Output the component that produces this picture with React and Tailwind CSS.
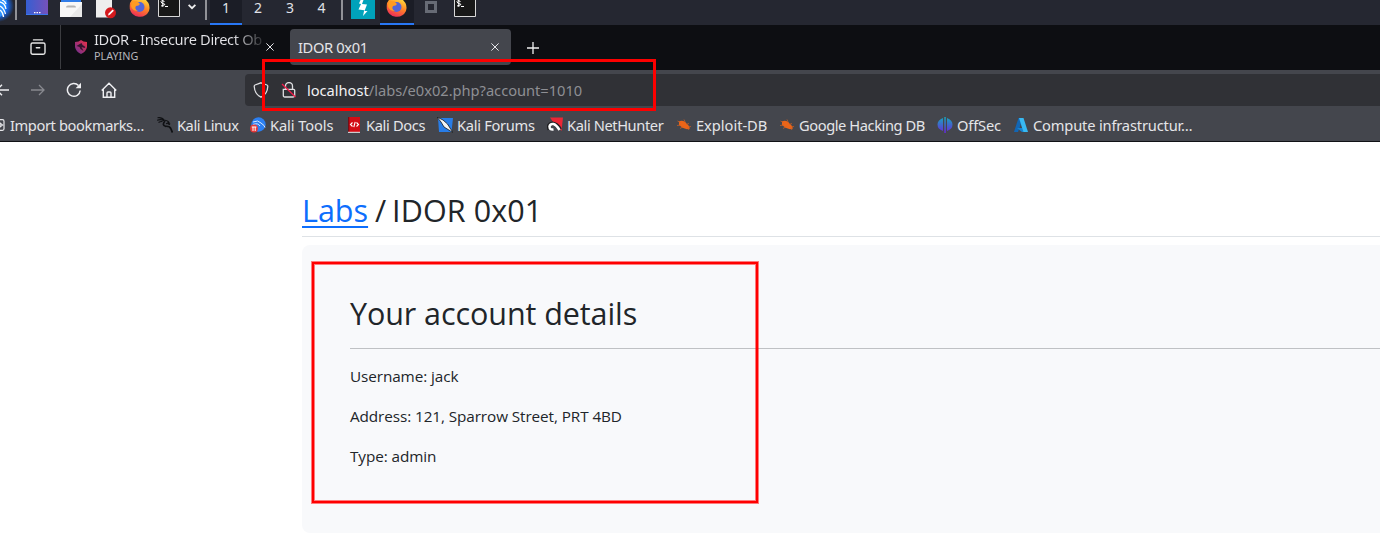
const PANEL_TEXT = "font-['Noto_Sans',sans-serif]";

function KaliMark() {
  return (
    <svg className="h-[25px] w-[15px] shrink-0" viewBox="0 0 15 25">
      <defs>
        <radialGradient id="kaliglow" gradientUnits="userSpaceOnUse" cx="-2" cy="6" r="16">
          <stop offset=".6" stopColor="#1768e8" />
          <stop offset="1" stopColor="#1768e8" stopOpacity="0" />
        </radialGradient>
      </defs>
      <path d="M0 0H15V25H0z" fill="url(#kaliglow)" />
      <path d="M0 0H7Q7 13 0 17Z" fill="#2c93ff" />
      <path d="M0 2Q5 3 6 9M0 6Q4 8 5.500 14M0 10Q3 12 3.500 17M2 0Q5 1 6 4" fill="none" stroke="#fff" strokeWidth="1.300" />
    </svg>
  );
}

function Desktop() {
  return (
    <svg className="h-[25px] w-[22px]" viewBox="0 0 22 25">
      <defs>
        <linearGradient id="desk">
          <stop offset="0" stopColor="#355fd2" />
          <stop offset="1" stopColor="#7651ba" />
        </linearGradient>
      </defs>
      <path d="M0 0h22v15H0z" fill="url(#desk)" />
      <path d="M0 14.500h22" stroke="#3b76ee" />
      <path d="M8 12.700h1.500m1 0H12m1 0h1.500" stroke="#fff" strokeWidth="1.200" />
    </svg>
  );
}

function Files() {
  return (
    <svg className="h-[25px] w-[22px]" viewBox="0 0 22 25">
      <path d="M0 2h22v15H0z" fill="#f7f7f7" />
      <path d="M22 4v13H10z" fill="#e9e9e9" />
      <path d="M1 0h20v2H1z" fill="#2f7ce8" />
      <path d="M6 7.500q0-2 2-2h6q2 0 2 2z" fill="#b4b4b4" />
    </svg>
  );
}

function Editor() {
  return (
    <svg className="h-[25px] w-[22px]" viewBox="0 0 22 25">
      <path d="M1 0h16v17.500H1z" fill="#eee" />
      <circle cx="15.500" cy="12.800" r="5.500" fill="#d3191d" />
      <path d="M13 15.500l.6-2 4-4 1.300 1.300-4 4z" fill="#fff" />
    </svg>
  );
}

function Firefox() {
  return (
    <svg className="h-[25px] w-[22px]" viewBox="0 0 22 25">
      <defs>
        <linearGradient id="fox" x1=".8" y1="0" x2=".3" y2="1">
          <stop offset="0" stopColor="#ffd43b" />
          <stop offset=".45" stopColor="#ff8325" />
          <stop offset="1" stopColor="#ed285c" />
        </linearGradient>
      </defs>
      <path d="M1 3L3 0H17Q22 5 20 11A10.300 10.300 0 0 1 .8 9Q.5 6 1 3Z" fill="url(#fox)" />
      <circle cx="10.500" cy="7" r="5" fill="#5265d8" />
      <path d="M3 0Q6 2 8 1L11 4Q10 6 7 6Q5 9 9 11Q3 11 2 6Z" fill="#ff9b22" />
    </svg>
  );
}

function Terminal() {
  return (
    <svg className="h-[25px] w-[22px]" viewBox="0 0 22 25">
      <path d="M.5-2h21v18.500H.5z" fill="#181818" stroke="#d8d8d8" />
      <path d="M6.500 1.500Q3-.5 3 1.500T6 4 3 6M4.800 0v7M7 6.500h3" fill="none" stroke="#fff" />
    </svg>
  );
}

function TopPanel() {
  const cell = "flex h-[25px] items-start justify-center text-[14px] leading-[15px] text-[#e0e2e8]";
  return (
    <div className={`flex h-[25px] items-start bg-[#252731] ${PANEL_TEXT}`}>
      <KaliMark />
      <div className="h-5 w-[2px] bg-[#919297]" />
      <div className="ml-[9px]"><Desktop /></div>
      <div className="ml-3"><Files /></div>
      <div className="ml-[13px]"><Editor /></div>
      <div className="ml-3"><Firefox /></div>
      <div className="ml-[7px]"><Terminal /></div>
      <svg className="ml-2 h-[14px] w-2" viewBox="0 0 8 14"><path d="M.6 4.800L4 8.200l3.400-3.400" fill="none" stroke="#f0f0f0" strokeWidth="1.800" /></svg>
      <div className="ml-[9px] h-5 w-[2px] bg-[#919297]" />
      <div className={`${cell} ml-[3px] w-8 border-b-2 border-[#2877f5] bg-[#1b1d26]`}>1</div>
      <div className={`${cell} w-8`}>2</div>
      <div className={`${cell} w-8`}>3</div>
      <div className={`${cell} w-[31px]`}>4</div>
      <div className="ml-1 h-5 w-[2px] bg-[#919297]" />
      <svg className="ml-2 h-[25px] w-6" viewBox="0 0 24 25">
        <path d="M0 0h24v19H0z" fill="#00a2ba" />
        <path d="M12.500 0L11 4l5 .5-2.500 6.500h3L12 16l1.200-5.800L7.500 9.500 10 4 8 3.500 9.500 0z" fill="#fff" />
      </svg>
      <div className="ml-[5px] flex h-[25px] w-[34px] justify-center border-b-2 border-[#2877f5] bg-[#1b1d26]"><Firefox /></div>
      <svg className="ml-[11px] h-[14px] w-3" viewBox="0 0 12 14"><path d="M1.500 2.500h9v9h-9z" fill="#252731" stroke="#676b75" strokeWidth="3" /></svg>
      <div className="ml-[17px]"><Terminal /></div>
    </div>
  );
}

function Cross() {
  return <svg className="h-2 w-2 shrink-0" viewBox="0 0 8 8"><path d="M.4.4l7.200 7.200M7.600.4L.4 7.600" stroke="#e5e5e9" strokeWidth="1" /></svg>;
}

function TabStrip() {
  return (
    <div className="flex h-[45px] items-start bg-[#0d0e12] text-[#e4e4e8]">
      <svg className="ml-[30px] mt-[14px] h-4 w-4" viewBox="0 0 16 16" fill="none" stroke="#e5e5e5" strokeWidth="1.400" strokeLinecap="round">
        <path d="M3.500.9h9M1 5.500q0-1.500 1.500-1.500h11Q15 4 15 5.500V13.500q0 1.700-1.700 1.700H2.700Q1 15.200 1 13.500zM6.300 8.700h3.400" />
      </svg>
      <div className="ml-[14px] h-11 w-px bg-[#3b3c40]" />
      <svg className="ml-[14px] mt-[15px] h-[14px] w-3" viewBox="0 0 12 14">
        <defs><linearGradient id="shield" x1="1" y1="0" x2="0" y2="1"><stop stopColor="#f02f45" /><stop offset="1" stopColor="#653095" /></linearGradient></defs>
        <path d="M0 2Q4 2 6 0 8 2 12 2V7Q11 12 6 14 1 12 0 7Z" fill="url(#shield)" />
        <path d="M1.500 6l5-3 1 2 3 2-1 1-3-1 2 4-3-2-1-2z" fill="#30152d" />
      </svg>
      <div className="ml-[7px] flex w-[170px] flex-col overflow-hidden whitespace-nowrap pt-1">
        <span className="bg-linear-to-r from-[#e4e4e8] from-82% to-[#e4e4e8]/10 bg-clip-text text-[14.67px] leading-5 tracking-[-0.36px] text-transparent">IDOR - Insecure Direct Ob</span>
        <span className="text-[10.8px] leading-[14px] text-[#b6b6bb]">PLAYING</span>
      </div>
      <div className="ml-[2px] mt-[18px]"><Cross /></div>
      <div className="ml-4 mt-1 flex h-9 w-[221px] items-center rounded bg-[#44464d] pl-2 pr-3">
        <span className="text-[14.67px] leading-5 tracking-[-0.35px]">IDOR 0x01</span>
        <div className="ml-auto"><Cross /></div>
      </div>
      <svg className="ml-4 mt-[17px] h-3 w-3" viewBox="0 0 12 12"><path d="M6 0v12M0 6h12" stroke="#f0f0f0" strokeWidth="1.300" /></svg>
    </div>
  );
}

function AddressBar() {
  return (
    <div className="flex h-10 items-center">
      <svg className="h-3 w-[9px]" viewBox="0 0 9 12"><path d="M0 6h9M2 .8L-3.200 6 2 11.200" fill="none" stroke="#efeff2" strokeWidth="1.400" /></svg>
      <svg className="ml-[22px] h-3 w-[14px]" viewBox="0 0 14 12" fill="none" stroke="#88898f" strokeWidth="1.300"><path d="M0 6h13M8 1l5 5-5 5" /></svg>
      <svg className="ml-[21px] h-4 w-4" viewBox="0 0 16 16" fill="none" stroke="#efeff2" strokeWidth="1.500"><path d="M12.500 3.500A6.400 6.400 0 1 0 14.200 8.500" /><path d="M15 .8v5.400H9.600z" fill="#efeff2" stroke="none" /></svg>
      <svg className="ml-[19px] h-4 w-4" viewBox="0 0 16 16" fill="none" stroke="#efeff2" strokeWidth="1.400"><path d="M.7 8.500L8 1.200l7.300 7.300M2.300 7.500v7.800h11.400V7.500M6 15v-4q0-1 1-1h2q1 0 1 1v4" /></svg>
      <div className="ml-32 flex h-8 flex-1 items-center rounded-l bg-[#303136] pl-2">
        <svg className="h-4 w-4" viewBox="0 0 16 16" fill="none" stroke="#dedee1" strokeWidth="1.300"><path d="M8 .8L14 3q.8.300.8 1.200Q14.500 12 8 15.200 1.500 12 1.200 4.200q0-.9.800-1.200z" /></svg>
        <svg className="ml-3 h-4 w-4" viewBox="0 0 16 16" fill="none" stroke="#dedee1" strokeWidth="1.300"><path d="M4.500 7V4a3.500 3.500 0 0 1 7 0v3M2.300 7.300h10.400q1 0 1 1v5.200q0 1.500-1.500 1.500H3.800q-1.500 0-1.500-1.500z" /><path d="M1 2l13.500 13" stroke="#f01c4a" /></svg>
        <span className="ml-[10px] whitespace-nowrap text-[14.67px] tracking-[-0.02px] text-[#f2f2f5]">localhost<span className="text-[#8e8f94]">/labs/e0x02.php?account=1010</span></span>
      </div>
    </div>
  );
}

function Dragon() {
  return <svg className="h-4 w-4" viewBox="0 0 16 16" fill="none" stroke="#101114"><path d="M.5.8Q5 0 7.500 3.500M0 3.300q4-1.500 7 .5M1.500 5.500q2-1.300 4-1M7 3q4 .5 5 2.500l-3 1.300" strokeWidth="1.100" /><path d="M8 4Q4.500 8 8.500 9.300 13 9 14 12q.5 1.500 1.500 3.500M10.500 6l2.500 1.500" strokeWidth="1.700" /></svg>;
}
function Tools() {
  return <svg className="h-4 w-4" viewBox="0 0 16 16"><circle cx="8.500" cy="7.500" r="7.200" fill="#2b7ff2" /><path d="M3 5q5-2.500 8 1l3 2.500 1 2M3 7.500q5-2 7 1.500" fill="none" stroke="#d8e8ff" /><circle cx="4" cy="11.500" r="3.900" fill="#e43838" /><path d="M1.800 10h4.600M3 10v4m2.200-4v4" stroke="#fff" /></svg>;
}
function Docs() {
  return <svg className="h-4 w-4" viewBox="0 0 16 16"><path d="M2 0h12v15H2z" fill="#d30c15" /><path d="M2 0h1.300v15H2z" fill="#780d15" /><path d="M2 15.300h12" stroke="#eee" /><path d="M6.500 5.500l-2 2 2 2m4-4l2 2-2 2M9.200 4.800l-1.400 5.400" fill="none" stroke="#fff" strokeWidth="1.100" /></svg>;
}
function Forums() {
  return <svg className="h-4 w-4" viewBox="0 0 16 16"><path d="M1 1h15l-1.500 14H2z" fill="#287de8" /><path d="M0 0l6 3 4.500 4L13 11l3 4.500-5-3L7 10 4 5z" fill="#f4f4f4" stroke="#18191c" strokeWidth=".8" /></svg>;
}
function Hunter() {
  return <svg className="h-4 w-4" viewBox="0 0 16 16"><path d="M3 .5h13L14.500 14 8 8z" fill="#ec2635" /><path d="M2.500 12.500Q.5 7 5.500 6.500 10 7 13 12.500" fill="none" stroke="#1d1d20" strokeWidth="4" /><path d="M6.500 12.500Q2.500 13 2.500 9.500 3 6.500 6.500 7 9.500 8 12.500 13" fill="none" stroke="#fff" strokeWidth="2.500" /></svg>;
}
function Bug() {
  return <svg className="h-4 w-4" viewBox="0 0 16 16"><path d="M3 4.500Q6 3 9 5l3.500 3.500 1.500 3-3 .8-4.500-1.500L3 8z" fill="#ec6518" /><path d="M1.500 4l3 1.500M1 8.500l4-.5M4 11.500l3.500-2M8 2.500L9.500 6M13 6.500L10 7.500M15 9.500l-3.500.5M13 13l-2-3" stroke="#d8611e" strokeWidth=".7" /></svg>;
}
function OffSec() {
  return <svg className="h-4 w-4" viewBox="0 0 16 16"><defs><linearGradient id="off" x2="0" y2="1"><stop stopColor="#16a7bc" /><stop offset="1" stopColor="#6a26dc" /></linearGradient></defs><path d="M6 1v13Q.5 12 .5 7.500T6 1M7.300 0h1.500v16H7.300zM10 1q5.500 2 5.500 6.500T10 14z" fill="url(#off)" /></svg>;
}
function Azure() {
  return <svg className="h-4 w-4" viewBox="0 0 16 16"><path d="M5.500 1H10L5 15H1z" fill="#1266b4" /><path d="M8 5l6 10H9L4 11h5z" fill="#1683d0" /><path d="M6 1h4.500L15 15h-4.500z" fill="#38b9f2" /></svg>;
}

function Bookmark({ icon, children, className }) {
  return <div className={`flex shrink-0 items-center gap-1 whitespace-nowrap ${className}`}>{icon}<span>{children}</span></div>;
}

function Bookmarks() {
  return (
    <div className="flex h-[31px] items-center pb-[2px] text-[14.67px] leading-5 text-[#e5e5e8]">
      <div className="flex w-[157px] shrink-0 items-center whitespace-nowrap tracking-[-0.4px]">
        <svg className="mr-[5px] h-3 w-[5px] shrink-0" viewBox="0 0 5 12"><path d="M0 .7h2.500q1.500 0 1.500 1.500v7.600q0 1.500-1.500 1.500H0M0 4l2.500 2L0 8z" fill="none" stroke="#e5e5e8" strokeWidth="1.200" /></svg>
        Import bookmarks…
      </div>
      <Bookmark icon={<Dragon />} className="w-[93px] tracking-[-0.45px]">Kali Linux</Bookmark>
      <Bookmark icon={<Tools />} className="w-[96px] tracking-[-0.1px]">Kali Tools</Bookmark>
      <Bookmark icon={<Docs />} className="w-[91px] tracking-[-0.35px]">Kali Docs</Bookmark>
      <Bookmark icon={<Forums />} className="w-[110px] tracking-[-0.3px]">Kali Forums</Bookmark>
      <Bookmark icon={<Hunter />} className="w-[129px] tracking-[-0.4px]">Kali NetHunter</Bookmark>
      <Bookmark icon={<Bug />} className="w-[103px] tracking-[-0.03px]">Exploit-DB</Bookmark>
      <Bookmark icon={<Bug />} className="w-[158px] tracking-[-0.42px]">Google Hacking DB</Bookmark>
      <Bookmark icon={<OffSec />} className="w-[76px] tracking-[-0.15px]">OffSec</Bookmark>
      <Bookmark icon={<Azure />} className="w-[190px] tracking-[-0.17px]">Compute infrastructur…</Bookmark>
    </div>
  );
}

export default function App() {
  return (
    <div className="relative h-[542px] w-[1380px] overflow-hidden bg-white font-['Noto_Sans',sans-serif]">
      <TopPanel />
      <TabStrip />
      <div className="h-[72px] border-b border-[#101115] bg-[#44464d]">
        <AddressBar />
        <Bookmarks />
      </div>
      <main className="pl-[302px] font-['Open_Sans',sans-serif] text-[#212529]">
        <h1 className="flex h-[95px] items-start whitespace-pre border-b border-[#dee2e6] pt-[49px] text-[30.5px] leading-[38px]"><a className="text-[#0d6efd] underline decoration-2 underline-offset-[4px]">Labs</a><span className="tracking-[0.1px]"><span className="tracking-[-1px]"> / </span>IDOR 0x01</span></h1>
        <section className="mt-2 h-[288px] rounded-l-lg bg-[#f8f9fb] pl-12 pt-[49px]">
          <h2 className="text-[30.5px] leading-[38px] tracking-[-0.08px]">Your account details</h2>
          <hr className="mt-4 border-[#bfc1c4]" />
          <div className="flex flex-col gap-4 pt-[15px] text-[15.3px] leading-6 tracking-[-0.09px]">
            <p>Username: jack</p>
            <p>Address: 121, Sparrow Street, PRT 4BD</p>
            <p>Type: admin</p>
          </div>
        </section>
      </main>
      <div className="absolute left-[262px] top-[59px] h-[52px] w-[394px] border-3 border-[#fd0000]" />
      <div className="absolute left-[312px] top-[262px] h-[241px] w-[446px] border-2 border-[#ff0000] shadow-[0_0_0_1px_#ff000080,inset_0_0_0_1px_#ff000080]" />
    </div>
  );
}
